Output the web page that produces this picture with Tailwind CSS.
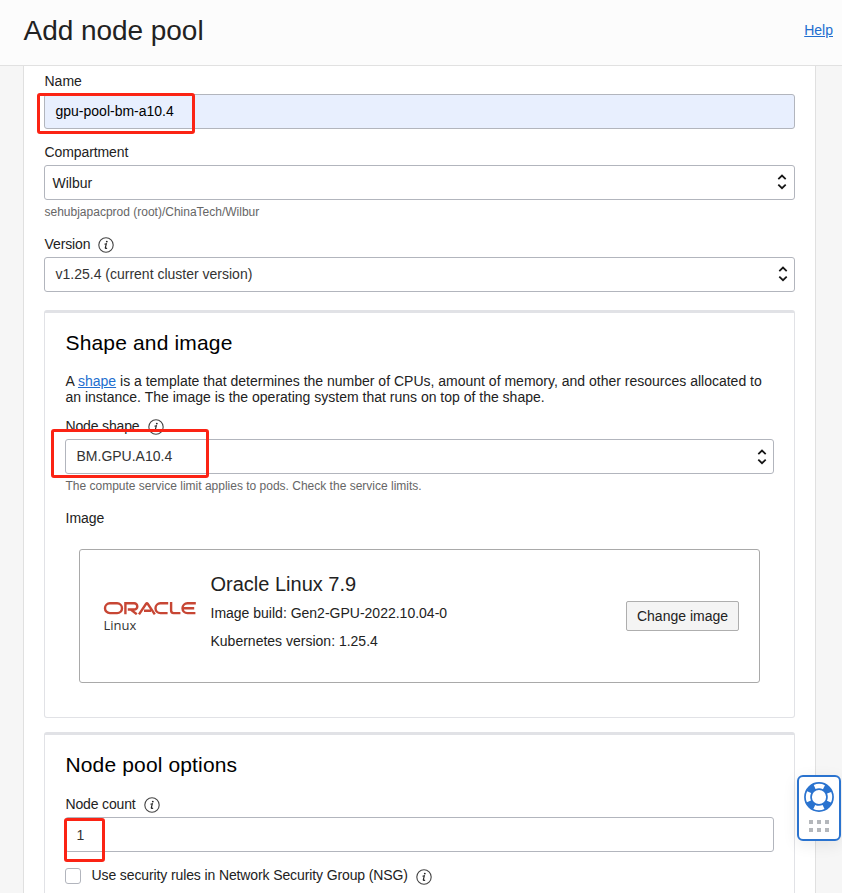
<!DOCTYPE html>
<html lang="en">
<head>
<meta charset="utf-8">
<title>Add node pool</title>
<script src="https://cdn.jsdelivr.net/npm/@tailwindcss/browser@4"></script>
</head>
<body class="relative h-[893px] w-[842px] overflow-hidden bg-[#f6f6f6] font-['Liberation_Sans',Arial,sans-serif] text-sm leading-4 text-[#222]">
<svg class="hidden">
  <symbol id="info" viewBox="0 0 16 16"><circle cx="8" cy="8" r="7.2" fill="none" stroke="#444" stroke-width="1.1"/><circle cx="8.8" cy="4.6" r=".9" fill="#222"/><path d="M6.5 7.3 8.3 6.8 7.3 10.9Q7.2 11.8 9.1 10.9" fill="none" stroke="#222" stroke-width="1.15"/></symbol>
  <symbol id="updown" viewBox="0 0 10 16"><path d="M1.3 5.1 5 1.6 8.7 5.1M1.3 10.7 5 14.2 8.7 10.7" fill="none" stroke="#161616" stroke-width="1.8"/></symbol>
</svg>

<header class="flex h-[66px] items-start justify-between border-b border-[#e1e1e1] bg-[#fcfcfc] pl-[23.5px] pr-[9px]">
  <h1 class="mt-[15px] text-[28px] leading-8 tracking-[-0.04px]">Add node pool</h1>
  <a class="mt-[22px] text-[#226ecf] underline">Help</a>
</header>

<main class="ml-[23px] h-[827px] w-[793px] border-x border-[#e0e0e0] bg-white px-5 pt-[7px]">
  <label class="block pl-[0.5px]">Name</label>
  <div class="relative mt-[5px] h-[35px] rounded-[3px] border border-[#b2b5bd] bg-[#e8effe] pl-[10.5px] pt-2 text-black">gpu-pool-bm-a10.4
    <div class="absolute -left-2 -top-[2px] h-[41px] w-[158px] rounded-[3px] border-3 border-[#fb2314]"></div>
  </div>

  <label class="mt-[15px] block pl-[0.5px] tracking-[-0.1px]">Compartment</label>
  <div class="mt-[5px] flex h-[35px] justify-between rounded-[3px] border border-[#b2b5bd] pl-[7.5px] pr-[7px] pt-[9px]">Wilbur<svg class="-mt-[1px] h-4 w-[10px]"><use href="#updown"/></svg></div>
  <p class="mt-1 pl-[0.5px] text-xs leading-4 text-[#666]">sehubjapacprod (root)/ChinaTech/Wilbur</p>

  <div class="mt-4 flex gap-[7px] pl-[0.5px] tracking-[-0.1px]">Version<svg class="mt-[1px] h-4 w-4"><use href="#info"/></svg></div>
  <div class="mt-1 flex h-[35px] justify-between rounded-[3px] border border-[#b2b5bd] pl-[10.5px] pr-[6px] pt-2 text-[#333]">v1.25.4 (current cluster version)<svg class="h-4 w-[10px]"><use href="#updown"/></svg></div>

  <section class="mt-[18px] h-[408px] rounded-[3px] border border-t-3 border-[#e1e2e6] px-5 pt-[18px]">
    <h2 class="pl-[0.5px] text-[21px] leading-6 tracking-[0.16px] text-black">Shape and image</h2>
    <p class="mt-[18px] whitespace-nowrap pl-[0.5px]">A <a class="text-[#226ecf] underline">shape</a> is a template that determines the number of CPUs, amount of memory, and other resources allocated to<br>an instance. The image is the operating system that runs on top of the shape.</p>
    <div class="mt-[13px] flex gap-2 pl-[0.5px] tracking-[-0.15px]">Node shape<svg class="mt-[1px] h-4 w-4"><use href="#info"/></svg></div>
    <div class="relative mt-1 flex h-[35px] justify-between rounded-[3px] border border-[#b2b5bd] pl-[10.5px] pr-[6px] pt-2 text-[#333]">BM.GPU.A10.4<svg class="mt-[1px] h-4 w-[10px]"><use href="#updown"/></svg>
      <div class="absolute -left-[15px] -top-[11px] h-[49px] w-[158px] rounded-[3px] border-3 border-[#fb2314]"></div>
    </div>
    <p class="mt-1 pl-[0.5px] text-xs leading-4 text-[#666]">The compute service limit applies to pods. Check the service limits.</p>
    <div class="mt-4 pl-[0.5px]">Image</div>
    <div class="mx-[14px] mt-[23px] flex h-[134px] rounded-[3px] border border-[#a9a9a9]">
      <div class="ml-[23px] mt-[51px] w-[107.5px]">
        <svg class="h-[14px] w-[94px]" viewBox="0 0 94 14" fill="none" stroke="#c74634" stroke-width="2.4">
          <rect x="2" y="2.3" width="17" height="9.8" rx="4.9"/>
          <path d="M22.4 13.3V2.3H31.2a3.1 3.1 0 0 1 0 6.2H24.8M27.4 8.4 33.8 13.2"/>
          <path d="M36 13.3 43.1 2.8Q43.9 1.8 44.7 2.8L51.8 13.3M41 9.8H48"/>
          <path d="M65.2 2.3H57.4a4.9 4.9 0 0 0 0 9.8H64.6M68.1 1.1V9.6Q68.1 12.1 70.6 12.1H77.4M92.8 2.3H84.4a4.9 4.9 0 0 0 0 9.8H92.4M80 7.2H91.2"/>
        </svg>
        <div class="mt-[2px] pl-[0.5px] font-['Open_Sans',sans-serif] text-[13px] leading-4 text-[#333]">Linux</div>
      </div>
      <div class="mt-[22px]">
        <h3 class="text-xl leading-6">Oracle Linux 7.9</h3>
        <p class="mt-[9px]">Image build: Gen2-GPU-2022.10.04-0</p>
        <p class="mt-3">Kubernetes version: 1.25.4</p>
      </div>
      <button class="ml-auto mr-5 mt-[51px] h-[30px] w-[113px] rounded-[2px] border border-[#aeaeae] bg-[#f4f4f4]">Change image</button>
    </div>
  </section>

  <section class="mt-[14px] h-[200px] rounded-[3px] border border-t-3 border-[#e1e2e6] px-5 pt-[18px]">
    <h2 class="pl-[0.5px] text-[21px] leading-6 tracking-[0.14px] text-black">Node pool options</h2>
    <div class="mt-[19px] flex gap-2 pl-[0.5px] tracking-[-0.15px]">Node count<svg class="mt-[1px] h-4 w-4"><use href="#info"/></svg></div>
    <div class="relative mt-1 h-[35px] rounded-[3px] border border-[#b2b5bd] pl-[10.5px] pt-[9px] text-[#333]">1
      <div class="absolute -left-[2px] top-0 h-[44px] w-[41px] rounded-[3px] border-3 border-[#fb2314]"></div>
    </div>
    <div class="mt-[15px] flex"><span class="mt-px size-4 rounded-[3px] border border-[#b2b5bd]"></span><span class="ml-[10.5px] tracking-[-0.115px]">Use security rules in Network Security Group (NSG)</span><svg class="ml-2 mt-[2px] h-4 w-4"><use href="#info"/></svg></div>
  </section>
</main>

<aside class="absolute left-[797px] top-[775px] flex h-[66px] w-11 flex-col items-center rounded-[6px] border-2 border-[#2a73cf] bg-white pt-[5px] shadow-[0_4px_16px_rgba(0,0,0,0.08)]">
  <svg class="size-[30px]" viewBox="0 0 30 30" fill="none"><circle cx="15" cy="15" r="11" stroke="#2a73cf" stroke-width="7.8"/><circle cx="15" cy="15" r="11" stroke="#fff" stroke-width="4.4" stroke-dasharray="9.6 7.68" stroke-dashoffset="4.8"/></svg>
  <svg class="mt-2 h-3 w-5" viewBox="0 0 20 12" fill="#b4b7bb"><path d="M0 0h4v4H0zM8 0h4v4H8zM16 0h4v4h-4zM0 8h4v4H0zM8 8h4v4H8zM16 8h4v4h-4z"/></svg>
</aside>
</body>
</html>
